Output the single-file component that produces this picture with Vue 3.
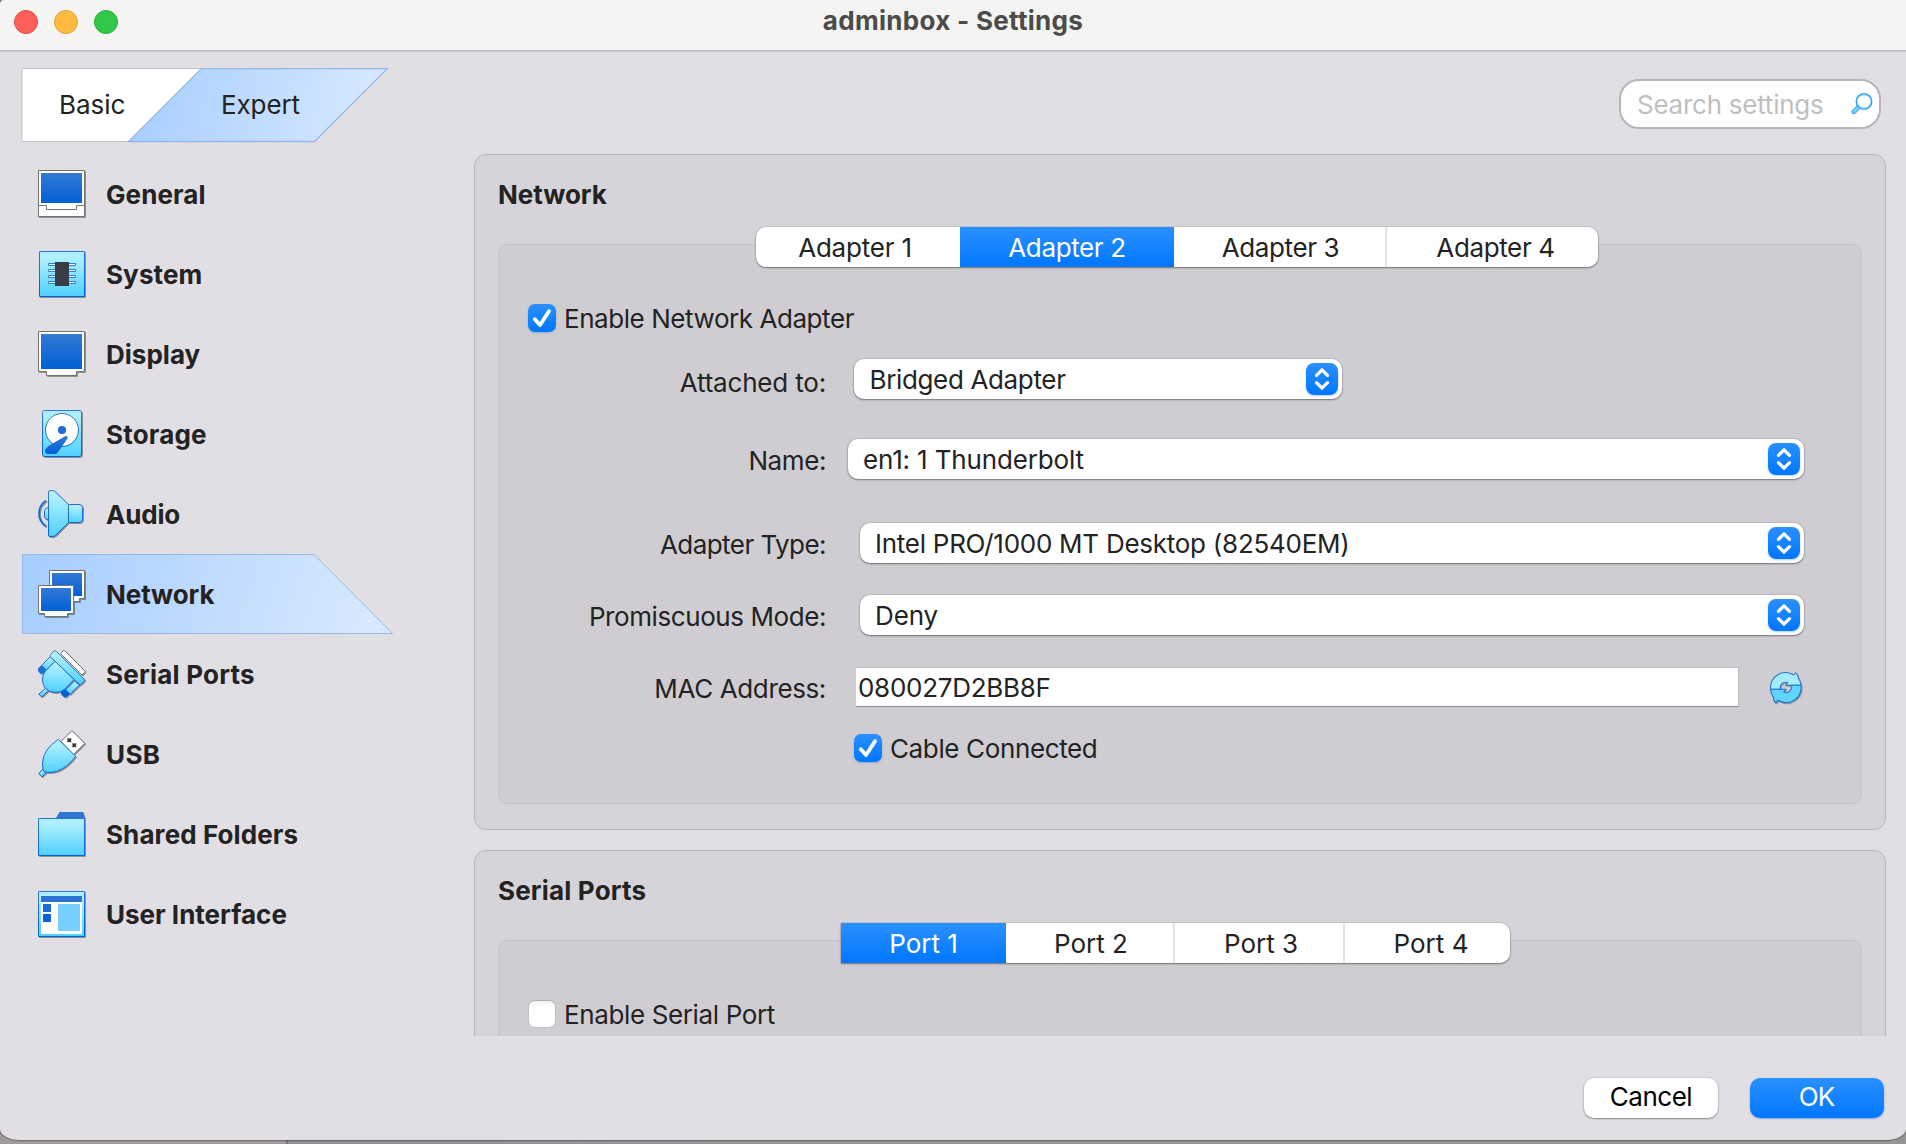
<script setup>
import { ref } from 'vue'

const categories = [
  { id: 'general', label: 'General', tracking: 0.083 },
  { id: 'system', label: 'System', tracking: 0.1 },
  { id: 'display', label: 'Display', tracking: 0.02 },
  { id: 'storage', label: 'Storage', tracking: 0.168 },
  { id: 'audio', label: 'Audio', tracking: -0.2 },
  { id: 'network', label: 'Network', tracking: -0.089 },
  { id: 'serial', label: 'Serial Ports', tracking: 0.215 },
  { id: 'usb', label: 'USB', tracking: 0.4 },
  { id: 'folders', label: 'Shared Folders', tracking: 0.095 },
  { id: 'ui', label: 'User Interface', tracking: 0 },
]
const current = ref('network')

const adapters = ['Adapter 1', 'Adapter 2', 'Adapter 3', 'Adapter 4']
const adapter = ref(1)
const ports = ['Port 1', 'Port 2', 'Port 3', 'Port 4']
const port = ref(0)

const selects = [
  { key: 'attached', label: 'Attached to:', value: 'Bridged Adapter', lt: -0.181, vt: -0.35 },
  { key: 'name', label: 'Name:', value: 'en1: 1 Thunderbolt', lt: -0.406, vt: -0.153 },
  { key: 'type', label: 'Adapter Type:', value: 'Intel PRO/1000 MT Desktop (82540EM)', lt: -0.55, vt: -0.26 },
  { key: 'promiscuous', label: 'Promiscuous Mode:', value: 'Deny', lt: -0.421, vt: -0.1 },
]
const mac = ref('080027D2BB8F')
</script>

<template>
  <div class="desktop">
    <svg class="defs" width="0" height="0" aria-hidden="true">
      <defs>
        <linearGradient id="cyan" x1="0" y1="0" x2="0" y2="1">
          <stop offset="0.15" stop-color="#aef0ff" /><stop offset="1" stop-color="#4fd0ff" />
        </linearGradient>
        <linearGradient id="blue" x1="0" y1="0" x2="0" y2="1">
          <stop offset="0" stop-color="#3379d4" /><stop offset="1" stop-color="#0060d5" />
        </linearGradient>
        <linearGradient id="edge" gradientUnits="userSpaceOnUse" x1="0" y1="0" x2="0" y2="48">
          <stop offset="0" stop-color="#3379d4" /><stop offset="1" stop-color="#0060d5" />
        </linearGradient>
        <linearGradient id="sel" x1="0" y1="0" x2="1" y2="0.07">
          <stop offset="0" stop-color="#a5cdff" /><stop offset="1" stop-color="#d8e9ff" />
        </linearGradient>
      </defs>
    </svg>

    <div class="window">
      <header class="titlebar">
        <div class="lights"><i class="red"></i><i class="yellow"></i><i class="green"></i></div>
        <h1>adminbox - Settings</h1>
      </header>

      <div class="toolbar">
        <div class="mode">
          <svg class="mode-bg" width="370" height="76" viewBox="0 0 370 76">
            <path d="M1 .5H181L108 73.5H1Z" fill="#fff" stroke="#c3c1c6" />
            <path d="M180.500 .5H366.500L293.500 73.500H107.500Z" fill="url(#sel)" stroke="#94b9ea" stroke-width="1.3" />
          </svg>
          <span class="basic">Basic</span>
          <span class="expert">Expert</span>
        </div>
        <label class="search">
          <span>Search settings</span>
          <svg width="22" height="22" viewBox="0 0 22 22">
            <path d="M6.500 12.500L1.200 17.500Q.3 19 1.500 20.300Q3 21.200 4.300 20.200L9.500 14.800Z" fill="#66d2ff" stroke="#3a93e2" />
            <circle cx="13" cy="8.500" r="7.300" fill="#fff" stroke="#8fe2ff" stroke-width="2.400" />
            <circle cx="13" cy="8.500" r="7.800" fill="none" stroke="#3a93e2" stroke-width="1.100" />
          </svg>
        </label>
      </div>

      <main class="body">
        <nav class="side">
          <div v-for="c in categories" :key="c.id" class="cat" @click="current = c.id">
            <svg v-if="current === c.id" class="cat-bg" width="373" height="81" viewBox="0 0 373 81">
              <path d="M.5 .5H292L370.500 79.500H.5Z" fill="url(#sel)" stroke="#94b9ea" />
            </svg>
            <svg class="icon" width="50" height="50" viewBox="0 0 50 50">
              <g v-if="c.id === 'general'">
                <path d="M.5 .5H46.500V46.500H.5Z" fill="#fff" stroke="#727272" />
                <path d="M3 3H44V33H3Z" fill="url(#blue)" />
                <path d="M.5 35.500H8.500V39.500H38.500V35.500H46.500" fill="none" stroke="#727272" />
              </g>
              <g v-else-if="c.id === 'system'" stroke="url(#edge)">
                <path d="M1.500 1.500H46.500V46.500H1.500Z" fill="url(#cyan)" />
                <path v-for="y in [13.5, 19.5, 25.5, 31.5]" :key="y" :d="`M10.500 ${y}H37.500V${y + 2}H10.500Z`" fill="#fff" stroke="#2f7fd4" stroke-linejoin="round" />
                <path d="M17 12H31V36H17Z" fill="#373c47" stroke="none" />
              </g>
              <g v-else-if="c.id === 'display'">
                <path d="M.5 1.500H46.500V41.500H38.500V45.500H8.500V41.500H.5Z" fill="#fff" stroke="#727272" />
                <path d="M3 4H44V39H3Z" fill="url(#blue)" />
              </g>
              <g v-else-if="c.id === 'storage'" stroke="url(#edge)">
                <rect x="4.500" y=".5" width="39" height="46" rx="2.200" fill="url(#cyan)" />
                <circle cx="24" cy="20" r="16.500" fill="#fff" />
                <circle cx="24" cy="20" r="4.100" fill="#1b6dd5" stroke="none" />
                <path d="M27.500 26L13 34.500Q7 38.300 7 40.500V42Q7.500 44 10 44H16.500Q19 44 20.500 41.500L29.500 28.500Q30.300 25.500 27.500 26Z" fill="url(#blue)" stroke="none" />
              </g>
              <g v-else-if="c.id === 'audio'" stroke="url(#edge)" fill="url(#cyan)">
                <path d="M8 10.500Q1 15.500 1 23.500T8 36.500" fill="none" stroke-width="1.800" />
                <path d="M10.500 17.500Q6.500 18 6.500 21V26Q6.500 29.500 10.500 30Z" />
                <path d="M30.500 14.500H41Q44.500 14.500 44.500 17.500V29.500Q44.500 32.500 41 32.500H30.500Z" />
                <path d="M12 .5H14.500Q16.500 .8 18 2.500L30.500 14.500V32.500L18 45Q16.500 46.500 14.500 46.500H12Q10.500 46.500 10.500 45V2Q10.500 .5 12 .5Z" />
              </g>
              <g v-else-if="c.id === 'network'">
                <path d="M11.500 .5H46.500V28.500H41.500V31.500H16.500V28.500H11.500Z" fill="#fff" stroke="#727272" />
                <path d="M14 3H44V26H14Z" fill="url(#blue)" />
                <path d="M.5 15.500H35.500V43.500H29.500V46.500H6.500V43.500H.5Z" fill="#fff" stroke="#727272" />
                <path d="M3 18H33V41H3Z" fill="url(#blue)" />
              </g>
              <g v-else-if="c.id === 'serial'" stroke="url(#edge)" fill="url(#cyan)" stroke-linejoin="round">
                <path d="M22.500 3.500L25 .9Q26 .2 27 .9L46.500 20.500Q47.200 21.500 46.500 22.500L44 25Z" fill="#fff" stroke="#727272" />
                <path d="M8 38L.8 44.200L3.800 46.800L10.500 40.500Z" />
                <path d="M12.500 6.500L3.500 15.500L8 20.500L17 11.500Z" />
                <path d="M36.500 31L27.500 40L32 44.500L41.500 35Z" />
                <path d="M3.500 15.500L.5 18.500V21L2.500 23.200H5L8.500 20Z" fill="#2170d5" />
                <path d="M26.500 39L23.500 42V44L26 46.800H28.500L31.500 43.500Z" fill="#0060d5" />
                <path d="M17.500 11L36 29.500L26.500 39.500Q23 42.500 17 42.500Q4.500 41.500 4.500 29Q4.500 24 8 20.500Z" />
                <path d="M12.500 4.500L15.800 1.200Q17 0 18.200 1.200L46 29Q47.200 30.200 46 31.400L43.500 34Q42.300 35 41 34L12.500 7Q11.500 5.800 12.500 4.500Z" />
              </g>
              <g v-else-if="c.id === 'usb'" stroke="url(#edge)" fill="url(#cyan)" stroke-linejoin="round">
                <path d="M23 11.500L34 .7L46.800 13.300L35.500 24.500Z" fill="#fff" stroke="#727272" />
                <path d="M29.300 8.300h1.400l.6.6.6-.6h1.400v1.400l-.6.6.6.6v1.400h-1.400l-.6-.6-.6.6h-1.400v-1.400l.6-.6-.6-.6ZM34.300 13.300h1.400l.6.6.6-.6h1.400v1.400l-.6.6.6.6v1.400h-1.400l-.6-.6-.6.6h-1.400v-1.400l.6-.6-.6-.6Z" fill="#333" stroke="none" />
                <path d="M4.500 39.500L.7 43.500L3.800 46.800L8.200 42.500Z" />
                <path d="M20.300 9.300L37.700 26.300Q29 38 18.500 41.500Q12 43.300 6.300 42Q4.500 40.500 4.500 33Q4.800 20 20.300 9.300Z" />
              </g>
              <g v-else-if="c.id === 'folders'">
                <path d="M17.500 9L21.500 2H45L47 8.500V12H17.500Z" fill="#2f76d3" />
                <path d="M.5 8.500H46.500V45.500H.5Z" fill="url(#cyan)" stroke="url(#edge)" />
              </g>
              <g v-else>
                <path d="M.5 1.500H46.500V46.500H.5Z" fill="url(#cyan)" stroke="url(#edge)" />
                <path d="M3 12H44V44H3Z" fill="#fff" />
                <path d="M3 6H44V12H3Z" fill="#2a73d3" />
                <path d="M5 14H13V22H5Z" fill="#1b6dd5" />
                <path d="M5 24H13V32H5Z" fill="#0a63d2" />
                <path d="M20 14H42V41H20Z" fill="#76d0ff" />
              </g>
            </svg>
            <span class="cat-label" :style="{ letterSpacing: c.tracking + 'px' }">{{ c.label }}</span>
          </div>
        </nav>

        <div class="content">
          <section class="panel network">
            <h2>Network</h2>
            <div class="tabs wide">
              <button v-for="(a, i) in adapters" :key="a" :class="{ on: adapter === i }" @click="adapter = i">{{ a }}</button>
            </div>
            <div class="group">
              <div class="check top">
                <i class="box"><svg width="28" height="28" viewBox="0 0 28 28"><path d="M6.800 15.200L12 21L21 7.200" /></svg></i>
                <span class="enable">Enable Network Adapter</span>
              </div>
              <div v-for="s in selects" :key="s.key" class="row" :class="s.key">
                <span class="lbl" :style="{ letterSpacing: s.lt + 'px' }">{{ s.label }}</span>
                <div class="select">
                  <span :style="{ letterSpacing: s.vt + 'px' }">{{ s.value }}</span>
                  <i class="arrows"><svg width="32" height="32" viewBox="0 0 32 32"><path d="M10.500 12.300L16 6.800L21.500 12.300M10.500 19.700L16 25.200L21.500 19.700" /></svg></i>
                </div>
              </div>
              <div class="row mac">
                <span class="lbl">MAC Address:</span>
                <div class="field">{{ mac }}</div>
                <svg class="refresh" width="34" height="34" viewBox="0 0 34 34">
                  <g stroke="url(#edge)" stroke-width="1.100" stroke-linejoin="round">
                    <path d="M.6 17.300A15 15 0 0 1 23.500 3L25.700 .6Q27.800 2 28.300 6Q30.800 9.500 30.900 13.300H15.700L17.600 10.800A5 5 0 0 0 10.800 17.300Z" fill="#a5ecff" />
                    <path d="M30.900 13.300A15 15 0 0 1 8 28.200L5.800 31Q3.700 29.200 3.200 25Q.8 21.500 .6 17.300H15.800L13.900 20A5 5 0 0 0 20.700 13.300Z" fill="#62d5ff" />
                  </g>
                </svg>
              </div>
              <div class="check cable">
                <i class="box"><svg width="28" height="28" viewBox="0 0 28 28"><path d="M6.800 15.200L12 21L21 7.200" /></svg></i>
                <span>Cable Connected</span>
              </div>
            </div>
          </section>

          <section class="panel serial">
            <h2 class="loose">Serial Ports</h2>
            <div class="tabs narrow">
              <button v-for="(p, i) in ports" :key="p" :class="{ on: port === i }" @click="port = i">{{ p }}</button>
            </div>
            <div class="group">
              <div class="check top">
                <i class="box off"></i>
                <span>Enable Serial Port</span>
              </div>
            </div>
          </section>
        </div>
      </main>

      <footer class="footer">
        <button class="btn">Cancel</button>
        <button class="btn primary">OK</button>
      </footer>
    </div>
  </div>
</template>

<style>
body {
  margin: 0;
}
</style>

<style scoped>
* {
  box-sizing: border-box;
}
.desktop {
  width: 1906px;
  height: 1144px;
  overflow: hidden;
  background: linear-gradient(90deg, #9f9a9c 0 286px, #77757a 286px 288px, #8f9098 288px 480px, #969596 700px);
  font-family: Inter, 'Liberation Sans', sans-serif;
  font-size: 26px;
  line-height: 32px;
  color: #232323;
  letter-spacing: -0.37px;
}
.defs {
  position: absolute;
}
button {
  font: inherit;
  letter-spacing: inherit;
  color: inherit;
  border: 0;
  padding: 0;
  margin: 0;
}
.window {
  display: flex;
  flex-direction: column;
  height: 1140px;
  background: #e1dfe4;
  border-radius: 4px 0 20px 20px / 5px 0 11px 11px;
  box-shadow: 0 0 1px 1px rgba(0, 0, 0, 0.3);
  overflow: hidden;
}
.titlebar {
  flex: none;
  display: grid;
  grid-template-columns: 1fr auto 1fr;
  height: 52px;
  background: #f4f4f2;
  border-bottom: 1px solid #d2d0d5;
  box-shadow: inset 0 -1px #b8b6bb;
}
.lights {
  display: flex;
  gap: 16px;
  padding: 10px 0 0 14px;
}
.lights i {
  width: 24px;
  height: 24px;
  border-radius: 50%;
  border: 1px solid;
}
.red {
  background: #fe5f58;
  border-color: #e14a45 !important;
}
.yellow {
  background: #febb40;
  border-color: #dfa03a !important;
}
.green {
  background: #34c84a;
  border-color: #2bab3a !important;
}
.titlebar h1 {
  margin: 0;
  padding-top: 5px;
  font-size: 26px;
  line-height: 32px;
  font-weight: 700;
  letter-spacing: 0.3px;
  color: #4b4b4a;
}
.toolbar {
  flex: none;
  display: flex;
  justify-content: space-between;
  height: 102px;
  padding: 16px 25px 0 21px;
}
.mode {
  position: relative;
  display: flex;
  width: 370px;
  height: 75px;
}
.mode-bg {
  position: absolute;
  left: 0;
  top: 0;
}
.basic,
.expert {
  position: relative;
  padding-top: 21px;
}
.basic {
  width: 161px;
  padding-left: 38px;
  letter-spacing: -0.03px;
}
.expert {
  padding-left: 39px;
  letter-spacing: -0.12px;
}
.search {
  display: flex;
  align-items: center;
  justify-content: space-between;
  width: 262px;
  height: 50px;
  margin-top: 11px;
  padding: 0 6px 0 16px;
  border: 2px solid #b7b5ba;
  border-radius: 20px;
  background: #fff;
  color: #bfbfbf;
  letter-spacing: -0.247px;
}
.search span,
.check span,
.select span {
  padding-top: 2px;
}
.body {
  flex: none;
  display: flex;
  height: 882px;
}
.side {
  width: 474px;
  padding-left: 22px;
}
.cat {
  position: relative;
  display: flex;
  align-items: center;
  height: 80px;
  padding-left: 16px;
}
.cat-bg {
  position: absolute;
  left: 0;
  top: 0;
}
.icon {
  position: relative;
  margin-top: 2px;
  filter: drop-shadow(1px 1px 0.3px rgba(0, 0, 0, 0.35));
}
.cat-label {
  position: relative;
  margin-left: 18px;
  padding-top: 2px;
  font-weight: 700;
}
.content {
  width: 1412px;
  overflow: hidden;
}
.panel {
  height: 676px;
  padding: 0 23px;
  border: 1px solid #b8b6bb;
  border-radius: 12px;
  background: #d6d4d9;
}
.panel.serial {
  margin-top: 20px;
}
.panel h2 {
  height: 72px;
  margin: 0;
  padding-top: 24px;
  font-size: 26px;
  line-height: 32px;
  font-weight: 700;
  letter-spacing: -0.05px;
}
.panel h2.loose {
  letter-spacing: 0.17px;
}
.tabs {
  position: relative;
  display: flex;
  height: 40px;
  background: #fff;
  border-radius: 10px;
  box-shadow: 0 0 0 1px rgba(0, 0, 0, 0.07), 0 1px 2px rgba(0, 0, 0, 0.4);
}
.tabs button {
  flex: none;
  padding-top: 2px;
  background: none;
}
.tabs .on {
  color: #fff;
  background: linear-gradient(#2b90ff, #0077ff);
}
.wide {
  width: 842px;
  margin-left: 258px;
}
.wide button:nth-child(1) {
  width: 204px;
  padding-right: 6px;
  letter-spacing: -0.2px;
}
.wide button:nth-child(2) {
  width: 214px;
}
.wide button:nth-child(3) {
  width: 213px;
  padding-left: 2px;
  border-right: 2px solid #e3e3e3;
}
.wide button:nth-child(4) {
  width: 211px;
  padding-left: 6px;
}
.narrow {
  width: 669px;
  margin-left: 343px;
  letter-spacing: 0;
  border-radius: 0 10px 10px 0;
}
.narrow button:nth-child(1) {
  width: 165px;
}
.narrow button:nth-child(2) {
  width: 169px;
  padding-left: 3px;
  border-right: 2px solid #e3e3e3;
}
.narrow button:nth-child(3) {
  width: 170px;
  padding-left: 4px;
  border-right: 2px solid #e3e3e3;
}
.narrow button:nth-child(4) {
  width: 165px;
  padding-left: 7px;
}
.group {
  width: 1364px;
  height: 560px;
  margin-top: -23px;
  border: 1px solid #c6c4c9;
  border-radius: 10px;
  background: #cfcdd1;
}
.check {
  display: flex;
  align-items: center;
  height: 28px;
  gap: 8px;
}
.check.top {
  margin: 59px 0 27px 29px;
}
.check.cable {
  margin: 27px 0 0 355px;
}
.enable {
  letter-spacing: -0.44px;
}
.box {
  display: block;
  width: 28px;
  height: 28px;
  border-radius: 7px;
  background: linear-gradient(#2b90ff, #0077ff);
  box-shadow: 0 1px 2px rgba(0, 90, 220, 0.3);
}
.box path {
  fill: none;
  stroke: #fff;
  stroke-width: 3.8;
  stroke-linecap: round;
  stroke-linejoin: round;
}
.box.off {
  width: 26px;
  height: 26px;
  margin: 0 1px;
  border-radius: 6px;
  background: linear-gradient(#f2f2f2, #fff 25%);
  box-shadow: 0 0 0 1px rgba(0, 0, 0, 0.06), 0 -1px 1px rgba(0, 0, 0, 0.1);
}
.row {
  display: flex;
  height: 40px;
  margin-bottom: 32px;
}
.row.attached {
  margin-bottom: 40px;
}
.row.name {
  margin-bottom: 44px;
}
.row.mac {
  margin-bottom: 0;
}
.lbl {
  flex: none;
  width: 328px;
  padding: 6px 1px 0 0;
  text-align: right;
}
.attached .lbl {
  padding-top: 8px;
}
.select {
  display: flex;
  align-items: center;
  justify-content: space-between;
  width: 944px;
  margin-left: 33px;
  padding: 0 4px 0 15px;
  border-radius: 10px;
  background: #fff;
  box-shadow: 0 0 0 1px rgba(0, 0, 0, 0.07), 0 1px 2px rgba(0, 0, 0, 0.4);
}
.attached .select {
  width: 488px;
  margin-left: 27px;
}
.name .select {
  width: 956px;
  margin-left: 21px;
}
.attached .select {
  padding-left: 15.5px;
}
.arrows {
  width: 32px;
  height: 32px;
  border-radius: 8px;
  background: linear-gradient(#2b90ff, #0077ff);
  box-shadow: 0 1px 2px rgba(0, 110, 255, 0.3);
}
.arrows path {
  fill: none;
  stroke: #fff;
  stroke-width: 3.2;
  stroke-linecap: round;
  stroke-linejoin: round;
}
.field {
  width: 883px;
  height: 40px;
  margin-left: 29px;
  padding: 4px 0 0 2px;
  background: #fff;
  border: 1px solid #c0bec2;
  border-left-width: 0;
  border-bottom-color: #8e8d91;
  letter-spacing: -0.281px;
}
.refresh {
  margin: 5px 0 0 31px;
  filter: drop-shadow(1px 1px 0.5px rgba(0, 0, 0, 0.25));
}
.footer {
  display: flex;
  justify-content: flex-end;
  gap: 32px;
  padding: 42px 22px 0 0;
}
.btn {
  width: 134px;
  height: 40px;
  border-radius: 10px;
  background: #fff;
  color: #000;
  letter-spacing: -0.49px;
  line-height: 36px;
  padding-bottom: 2px;
  box-shadow: 0 0 0 1px rgba(0, 0, 0, 0.05), 0 1px 2px rgba(0, 0, 0, 0.35);
}
.btn.primary {
  color: #fff;
  background: linear-gradient(#2b90ff, #0077ff);
  letter-spacing: -1px;
  padding-right: 1px;
  box-shadow: 0 1px 2px rgba(0, 90, 220, 0.4);
}
</style>
